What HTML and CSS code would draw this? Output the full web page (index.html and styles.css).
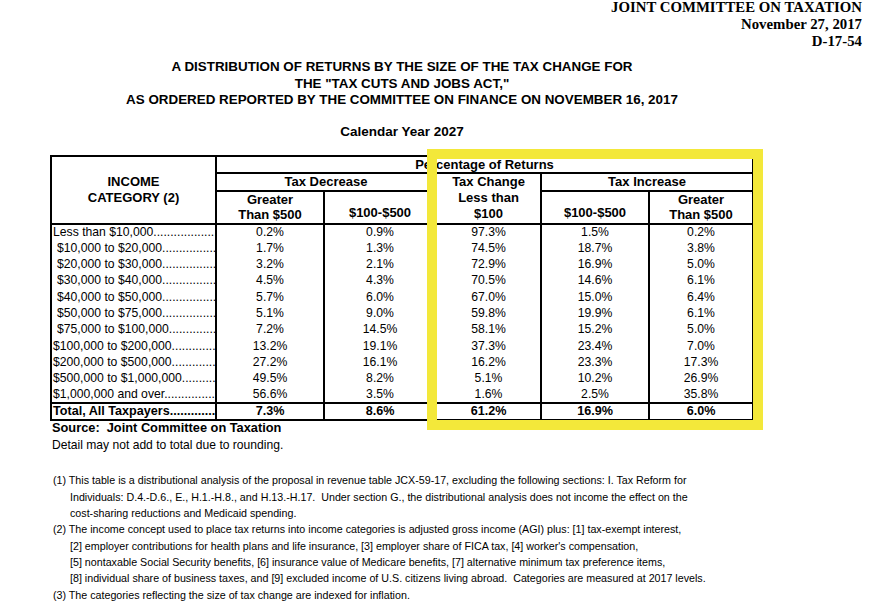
FILE: index.html
```html
<!DOCTYPE html>
<html>
<head>
<meta charset="utf-8">
<link rel="stylesheet" href="styles.css">
</head>
<body>
<div class="page">
  <div class="jct">
    <div>JOINT COMMITTEE ON TAXATION</div>
    <div>November 27, 2017</div>
    <div>D-17-54</div>
  </div>
  <div class="title">
    <div>A DISTRIBUTION OF RETURNS BY THE SIZE OF THE TAX CHANGE FOR</div>
    <div>THE "TAX CUTS AND JOBS ACT,"</div>
    <div>AS ORDERED REPORTED BY THE COMMITTEE ON FINANCE ON NOVEMBER 16, 2017</div>
  </div>
  <div class="year">Calendar Year 2027</div>
  <div class="tablewrap">
    <table class="dist">
      <colgroup>
        <col class="c1"><col class="c2"><col class="c3"><col class="c4"><col class="c5"><col class="c6">
      </colgroup>
      <thead>
        <tr class="h1">
          <th rowspan="3" class="cat">INCOME<br>CATEGORY (2)</th>
          <th colspan="5" class="pct">Percentage of Returns</th>
        </tr>
        <tr class="h2">
          <th colspan="2" class="grp">Tax Decrease</th>
          <th rowspan="2" class="chg">Tax Change<br>Less than<br>$100</th>
          <th colspan="2" class="grp">Tax Increase</th>
        </tr>
        <tr class="h3">
          <th class="two">Greater<br>Than $500</th>
          <th class="low">$100-$500</th>
          <th class="low">$100-$500</th>
          <th class="two">Greater<br>Than $500</th>
        </tr>
      </thead>
      <tbody>
        <tr><td class="lab"><span>Less than $10,000</span></td><td>0.2%</td><td>0.9%</td><td>97.3%</td><td>1.5%</td><td>0.2%</td></tr>
        <tr><td class="lab ind"><span>$10,000 to $20,000</span></td><td>1.7%</td><td>1.3%</td><td>74.5%</td><td>18.7%</td><td>3.8%</td></tr>
        <tr><td class="lab ind"><span>$20,000 to $30,000</span></td><td>3.2%</td><td>2.1%</td><td>72.9%</td><td>16.9%</td><td>5.0%</td></tr>
        <tr><td class="lab ind"><span>$30,000 to $40,000</span></td><td>4.5%</td><td>4.3%</td><td>70.5%</td><td>14.6%</td><td>6.1%</td></tr>
        <tr><td class="lab ind"><span>$40,000 to $50,000</span></td><td>5.7%</td><td>6.0%</td><td>67.0%</td><td>15.0%</td><td>6.4%</td></tr>
        <tr><td class="lab ind"><span>$50,000 to $75,000</span></td><td>5.1%</td><td>9.0%</td><td>59.8%</td><td>19.9%</td><td>6.1%</td></tr>
        <tr><td class="lab ind"><span>$75,000 to $100,000</span></td><td>7.2%</td><td>14.5%</td><td>58.1%</td><td>15.2%</td><td>5.0%</td></tr>
        <tr><td class="lab"><span>$100,000 to $200,000</span></td><td>13.2%</td><td>19.1%</td><td>37.3%</td><td>23.4%</td><td>7.0%</td></tr>
        <tr><td class="lab"><span>$200,000 to $500,000</span></td><td>27.2%</td><td>16.1%</td><td>16.2%</td><td>23.3%</td><td>17.3%</td></tr>
        <tr><td class="lab"><span>$500,000 to $1,000,000</span></td><td>49.5%</td><td>8.2%</td><td>5.1%</td><td>10.2%</td><td>26.9%</td></tr>
        <tr><td class="lab"><span>$1,000,000 and over</span></td><td>56.6%</td><td>3.5%</td><td>1.6%</td><td>2.5%</td><td>35.8%</td></tr>
        <tr class="total"><td class="lab"><span>Total, All Taxpayers</span></td><td>7.3%</td><td>8.6%</td><td>61.2%</td><td>16.9%</td><td>6.0%</td></tr>
      </tbody>
    </table>
    <div class="highlight"></div>
  </div>
  <div class="source">Source:&nbsp; Joint Committee on Taxation</div>
  <div class="detail">Detail may not add to total due to rounding.</div>
  <div class="notes">
    <div class="note">(1) This table is a distributional analysis of the proposal in revenue table JCX-59-17, excluding the following sections: I. Tax Reform for</div>
    <div class="cont">Individuals: D.4.-D.6., E., H.1.-H.8., and H.13.-H.17.&nbsp; Under section G., the distributional analysis does not income the effect on the</div>
    <div class="cont">cost-sharing reductions and Medicaid spending.</div>
    <div class="note">(2) The income concept used to place tax returns into income categories is adjusted gross income (AGI) plus: [1] tax-exempt interest,</div>
    <div class="cont">[2] employer contributions for health plans and life insurance, [3] employer share of FICA tax, [4] worker's compensation,</div>
    <div class="cont">[5] nontaxable Social Security benefits, [6] insurance value of Medicare benefits, [7] alternative minimum tax preference items,</div>
    <div class="cont">[8] individual share of business taxes, and [9] excluded income of U.S. citizens living abroad.&nbsp; Categories are measured at 2017 levels.</div>
    <div class="note">(3) The categories reflecting the size of tax change are indexed for inflation.</div>
  </div>
</div>
</body>
</html>
```

FILE: styles.css
```css
html, body {
  margin: 0;
  padding: 0;
  background: #ffffff;
}

.page {
  width: 869px;
  height: 616px;
  overflow: hidden;
  font-family: "Liberation Sans", Arial, sans-serif;
  color: #000;
}

.jct {
  font-family: "Liberation Serif", "Times New Roman", serif;
  font-weight: bold;
  font-size: 14.8px;
  line-height: 17px;
  text-align: right;
  padding-right: 7px;
  margin-top: -1px;
}

.title {
  width: 804px;
  text-align: center;
  font-weight: bold;
  font-size: 13.4px;
  line-height: 16.5px;
  margin-top: 9px;
}

.year {
  width: 804px;
  text-align: center;
  font-weight: bold;
  font-size: 13.5px;
  line-height: 16px;
  margin-top: 15px;
}

.tablewrap {
  position: relative;
  margin-top: 15px;
  margin-left: 50px;
  width: 702px;
}

.dist {
  border-collapse: collapse;
  table-layout: fixed;
  width: 702px;
  font-size: 12.2px;
  border: 2.5px solid #000;
}

.c1 { width: 165px; }
.c2 { width: 108px; }
.c3 { width: 112px; }
.c4 { width: 105px; }
.c5 { width: 108px; }
.c6 { width: 104px; }

.dist th {
  font-weight: bold;
  font-size: 13px;
  padding: 0;
  line-height: 16px;
  border: 2px solid #000;
  vertical-align: middle;
}

.dist tr.h1 { height: 15px; }
.dist tr.h2 { height: 18px; }
.dist tr.h3 { height: 33px; }

.dist th.pct {
  line-height: 14px;
  padding-top: 1px;
}

.dist th.cat {
  padding-top: 1px;
}

.dist th.two {
  line-height: 15.5px;
}

.dist th.low {
  vertical-align: bottom;
  padding-bottom: 2px;
}

.dist tbody tr { height: 16.36px; }

.dist td {
  padding: 0;
  line-height: 15px;
  text-align: center;
  vertical-align: middle;
  border-left: 2px solid #000;
  border-right: 2px solid #000;
  white-space: nowrap;
}

.dist td.lab {
  text-align: left;
  overflow: hidden;
  padding-left: 1px;
}

.dist td.lab span::after {
  content: "..................................................";
}

.dist td.ind {
  padding-left: 5px;
}

.dist tr.total { height: 16px; }

.dist tr.total td {
  font-weight: bold;
  font-size: 12.6px;
  border-top: 2px solid #000;
  border-bottom: 2.5px solid #000;
}

.highlight {
  position: absolute;
  left: 377px;
  right: -11px;
  top: -6px;
  bottom: -9px;
  border: 10px solid #f3e83a;
}

.source {
  font-weight: bold;
  font-size: 12.8px;
  line-height: 14px;
  margin-left: 52px;
  margin-top: 0;
}

.detail {
  font-size: 12.1px;
  line-height: 16px;
  margin-left: 52px;
  margin-top: 2px;
}

.notes {
  margin-top: 19px;
  margin-left: 53px;
  font-size: 10.7px;
  line-height: 16.3px;
}

.cont {
  padding-left: 17px;
}
```
